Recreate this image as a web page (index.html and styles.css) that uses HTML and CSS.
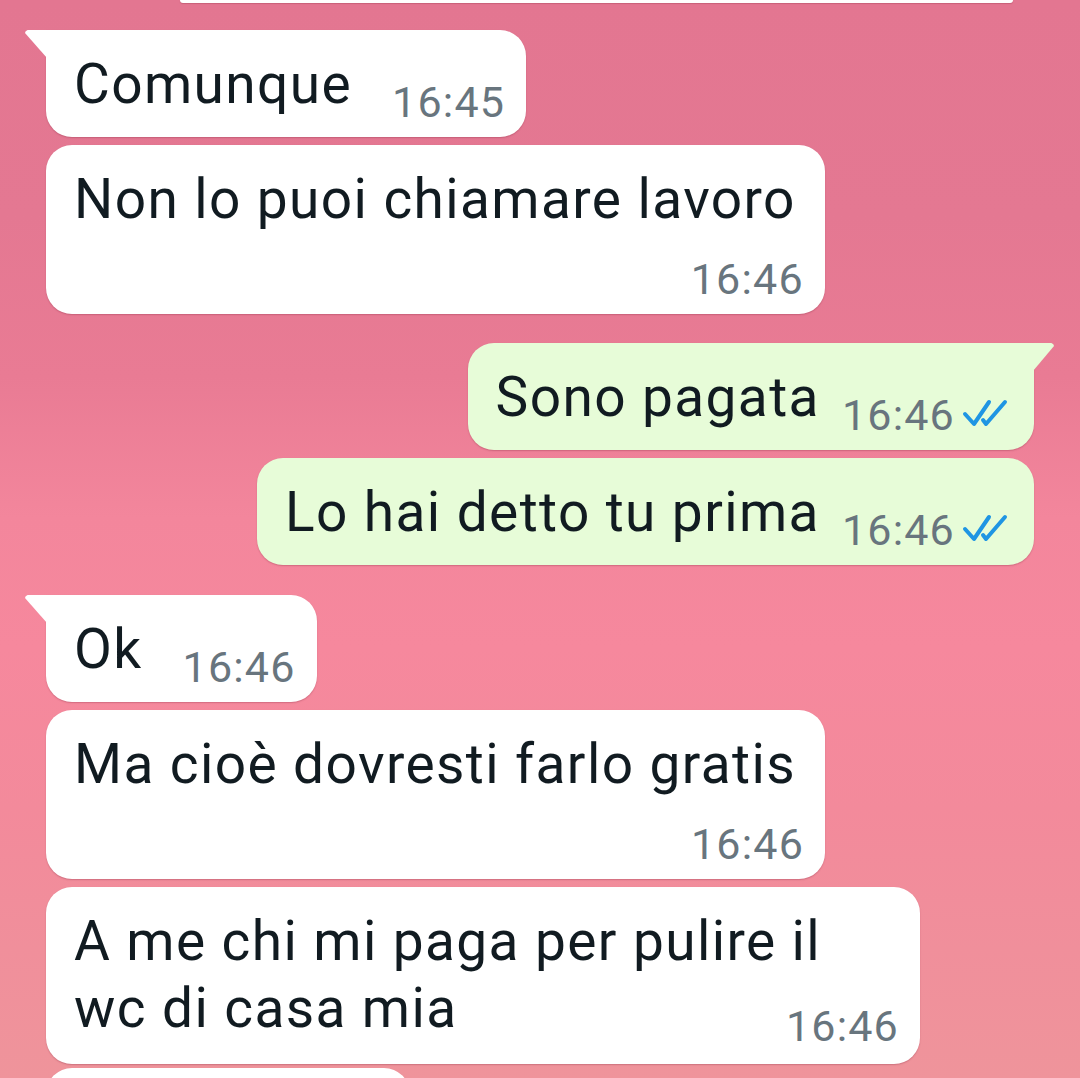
FILE: index.html
```html
<!DOCTYPE html>
<html lang="it">
<head>
<meta charset="utf-8">
<title>Chat</title>
<link rel="stylesheet" href="styles.css">
</head>
<body>
<div class="chat">
  <div class="prev"></div>

  <div class="msg in tail first">
    <span class="text">Comunque</span>
    <span class="meta"><span class="time">16:45</span></span>
  </div>
  <div class="msg in stack">
    <span class="text">Non lo puoi chiamare lavoro</span>
    <span class="meta"><span class="time">16:46</span></span>
  </div>

  <div class="msg out tail start">
    <span class="text">Sono pagata</span>
    <span class="meta"><span class="time">16:46</span>
      <svg class="ticks" viewBox="0 0 46 28" aria-hidden="true"><path d="M3 15 L12 25 L27 3 M21 21 L24 25 L43 3"/></svg>
    </span>
  </div>
  <div class="msg out">
    <span class="text">Lo hai detto tu prima</span>
    <span class="meta"><span class="time">16:46</span>
      <svg class="ticks" viewBox="0 0 46 28" aria-hidden="true"><path d="M3 15 L12 25 L27 3 M21 21 L24 25 L43 3"/></svg>
    </span>
  </div>

  <div class="msg in tail start">
    <span class="text">Ok</span>
    <span class="meta"><span class="time">16:46</span></span>
  </div>
  <div class="msg in stack">
    <span class="text">Ma cioè dovresti farlo gratis</span>
    <span class="meta"><span class="time">16:46</span></span>
  </div>
  <div class="msg in wrap">
    <span class="text">A me chi mi paga per pulire il wc di casa mia</span>
    <span class="meta"><span class="time">16:46</span></span>
  </div>
  <div class="msg in next"></div>
</div>
</body>
</html>
```

FILE: styles.css
```css
* { box-sizing: border-box; }

html, body {
  margin: 0;
  padding: 0;
}

body {
  width: 1080px;
  height: 1078px;
  overflow: hidden;
  font-family: Roboto, "Noto Sans", sans-serif;
  background:
    linear-gradient(180deg,
      #e37691 0%,
      #e47892 20%,
      #e97b94 35%,
      #f3869c 48%,
      #f6889d 60%,
      #f38a9b 75%,
      #f08f9b 88%,
      #ef949b 100%);
}

.chat {
  display: flex;
  flex-direction: column;
  align-items: flex-start;
  padding: 0 46px;
}

.prev {
  margin-left: 134px;
  width: 833px;
  height: 3px;
  background: #fff;
  border-radius: 0 0 3px 3px;
  box-shadow: 0 1px 1px rgba(120, 30, 50, 0.25);
}

.msg {
  position: relative;
  max-width: 874px;
  display: flex;
  align-items: flex-end;
  margin-top: 8px;
  padding: 21px 21px 15px 28px;
  background: #ffffff;
  border-radius: 26px;
  box-shadow: 0 1px 1.5px rgba(120, 30, 50, 0.28);
  color: #111b21;
}

.msg.first { margin-top: 27px; }
.msg.start { margin-top: 29px; }
.msg.in.start { margin-top: 30px; }

.msg.out {
  align-self: flex-end;
  background: #e7fcd8;
  padding-right: 26px;
}

.text {
  font-size: 55px;
  letter-spacing: 1.4px;
  line-height: 67px;
  margin-bottom: 4px;
  white-space: nowrap;
}

.meta {
  display: flex;
  align-items: flex-start;
  margin-left: 40px;
  font-size: 43px;
  letter-spacing: 1.2px;
  line-height: 40px;
  color: #68757e;
  white-space: nowrap;
}

.out .meta { margin-left: 22px; }

.ticks {
  width: 46px;
  height: 28px;
  margin-top: 4px;
  margin-left: 7px;
  fill: none;
  stroke: #1f95e3;
  stroke-width: 4;
  stroke-linecap: round;
  stroke-linejoin: round;
}

/* time on its own line */
.msg.stack {
  flex-direction: column;
}
.stack .text {
  margin-bottom: 0;
  margin-right: 8px;
}
.stack .meta {
  align-self: flex-end;
  margin-top: 26px;
  margin-left: 0;
}

/* wrapped text, time in last line */
.msg.wrap {
  display: block;
  padding-right: 61px;
  padding-bottom: 18px;
  font-size: 55px;
  line-height: 67px;
}
.wrap .text {
  display: inline;
  white-space: normal;
  margin-bottom: 0;
}
.wrap .meta {
  justify-content: flex-end;
  margin-top: -36px;
  margin-left: 0;
  margin-right: -40px;
}

.msg.next {
  margin-top: 4px;
  width: 364px;
  height: 107px;
}

/* bubble tails */
.msg.in.tail { border-top-left-radius: 0; }
.msg.out.tail { border-top-right-radius: 0; }

.tail::before {
  content: "";
  position: absolute;
  top: 0;
  width: 22px;
  height: 28px;
  background: inherit;
}
.in.tail::before {
  left: -21px;
  clip-path: polygon(0 3px, 0.7px 1.2px, 2.6px 0, 100% 0, 100% 100%);
}
.out.tail::before {
  right: -20px;
  width: 21px;
  clip-path: polygon(100% 3px, calc(100% - 0.7px) 1.2px, calc(100% - 2.6px) 0, 0 0, 0 100%);
}
```
